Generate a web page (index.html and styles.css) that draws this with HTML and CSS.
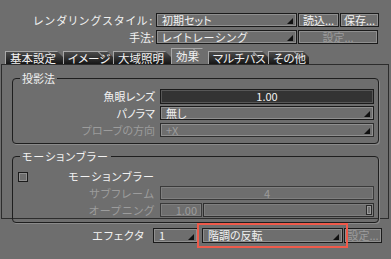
FILE: index.html
```html
<!DOCTYPE html>
<html lang="ja">
  <head>
    <meta charset="UTF-8" />
    <title>レンダリング</title>
    <link rel="stylesheet" href="styles.css">
  </head>
  <body>
    <div class="head">
      <div class="row">
        <span class="lbl wide-kana">レンダリングスタイル:</span>
        <div class="sel style">初期セット<i class="tri"></i></div>
        <div class="btn load">読込...</div>
        <div class="btn save">保存...</div>
      </div>
      <div class="row">
        <span class="lbl">手法:</span>
        <div class="sel style kana">レイトレーシング<i class="tri"></i></div>
        <div class="btn opts off">設定...</div>
      </div>
    </div>

    <div class="tabs">
      <div class="tab t1">基本設定</div>
      <div class="tab t2">イメージ</div>
      <div class="tab t3">大域照明</div>
      <div class="tab t4 active">効果</div>
      <div class="tab t5">マルチパス</div>
      <div class="tab t6">その他</div>
    </div>

    <div class="pane">
      <fieldset class="grp proj">
        <legend>投影法</legend>
        <div class="frow">
          <span class="flbl">魚眼レンズ</span>
          <div class="field dark">1.00</div>
        </div>
        <div class="frow">
          <span class="flbl">パノラマ</span>
          <div class="sel wide">無し<i class="tri"></i></div>
        </div>
        <div class="frow">
          <span class="flbl off">プローブの方向</span>
          <div class="sel wide off">+X<i class="tri"></i></div>
        </div>
      </fieldset>

      <fieldset class="grp blur">
        <legend class="kana">モーションブラー</legend>
        <div class="frow">
          <span class="flbl check"><i class="cb"></i><b class="kana">モーションブラー</b></span>
        </div>
        <div class="frow">
          <span class="flbl off kana">サブフレーム</span>
          <div class="field off">4</div>
        </div>
        <div class="frow">
          <span class="flbl off kana">オープニング</span>
          <div class="field off small">1.00</div>
          <div class="slider"><i class="thumb"></i></div>
        </div>
      </fieldset>
    </div>

    <div class="foot">
      <span class="lbl short kana">エフェクタ</span>
      <div class="sel num">1<i class="tri"></i></div>
      <div class="sel effect marked">階調の反転<i class="tri"></i></div>
      <div class="btn opts2 off">設定...</div>
    </div>
  </body>
</html>
```

FILE: styles.css
```css
* {
  margin: 0;
  padding: 0;
  box-sizing: border-box;
}
body {
  width: 391px;
  height: 259px;
  overflow: hidden;
  background-color: #6e6e6e;
  color: #f2f2f2;
  font-family: "Noto Sans CJK JP", "Noto Sans", sans-serif;
  font-size: 11px;
  line-height: 14px;
  font-feature-settings: "palt";
}
.off {
  color: #9c9c9c;
}
.kana {
  letter-spacing: 1px;
}
.wide-kana {
  letter-spacing: 1.8px;
}
b {
  font-weight: normal;
}

/* top rows */
.head {
  padding-top: 13px;
}
.row {
  display: flex;
  height: 14px;
  margin-bottom: 3px;
}
.lbl {
  width: 154px;
  margin-right: 2px;
  text-align: right;
}
.sel {
  display: flex;
  align-items: flex-end;
  height: 14px;
  padding-left: 5px;
  border: 1px solid #1b1b1b;
  box-shadow: inset 0 0 0 1px #8f8f8f;
  line-height: 12px;
}
.sel.style {
  width: 141px;
}
.tri {
  margin-left: auto;
  margin-right: 3px;
  margin-bottom: 2px;
  width: 0;
  height: 0;
  border-left: 6px solid transparent;
  border-bottom: 6px solid #111;
}
.btn {
  height: 14px;
  margin-left: 1px;
  border: 1px solid #1b1b1b;
  box-shadow: inset 0 0 0 1px #8f8f8f;
  text-align: center;
  line-height: 12px;
}
.btn.load {
  width: 41px;
}
.btn.save {
  width: 39px;
}
.btn.opts {
  width: 80px;
}

/* tabs */
.tabs {
  display: flex;
  align-items: flex-end;
  height: 16px;
  margin-top: 4px;
  padding-left: 5px;
}
.tab {
  position: relative;
  height: 13px;
  padding-left: 4px;
  border-top: 1px solid #a8a8a8;
  border-left: 1px solid #a8a8a8;
  background-image: linear-gradient(#4c4c4c, #161616);
  clip-path: polygon(0 0, calc(100% - 6px) 0, 100% 6px, 100% 100%, 0 100%);
  line-height: 12px;
  font-size: 11.5px;
  white-space: nowrap;
}
.tab::after {
  content: "";
  position: absolute;
  top: -1px;
  right: 0;
  width: 9px;
  height: 1px;
  background-color: #a8a8a8;
  transform-origin: left;
  transform: translateX(-6px) rotate(45deg);
}
.tab.t1 { width: 58px; }
.tab.t2 { width: 50px; }
.tab.t3 { width: 58px; }
.tab.t4 { width: 37px; }
.tab.t5 { width: 60px; }
.tab.t6 { width: 41px; }
.tab.active {
  height: 16px;
  padding-top: 1px;
  background-image: none;
  background-color: #6e6e6e;
}

/* pane */
.pane {
  width: 388px;
  height: 155px;
  margin-left: 1px;
  padding: 0 0 0 10px;
  border: 1px solid #2c2c2c;
}
.grp {
  width: 367px;
  margin-top: 6px;
  padding: 0 3px 5px 0;
  border: 1px solid #1e1e1e;
  border-radius: 4px;
  box-shadow: 1px 1px 0 #8a8a8a;
}
.grp legend {
  margin-left: 7px;
  padding: 0 2px;
  line-height: 14px;
}
.grp.proj {
  padding-top: 2px;
}
.grp.blur {
  margin-top: 5px;
  padding-bottom: 5px;
}
.frow {
  display: flex;
  height: 15px;
  margin-top: 2px;
}
.blur .frow {
  height: 14px;
  margin-top: 3px;
}
.blur .frow:first-of-type {
  margin-top: 6px;
}
.flbl {
  width: 142px;
  margin-right: 5px;
  text-align: right;
  line-height: 15px;
}
.flbl.check {
  display: flex;
  align-items: center;
  justify-content: space-between;
  padding-left: 5px;
}
.cb {
  width: 10px;
  height: 10px;
  margin-top: 2px;
  border: 1px solid #1b1b1b;
  box-shadow: inset 0 0 0 1px #8f8f8f;
}
.field {
  width: 214px;
  border: 1px solid #1b1b1b;
  box-shadow: inset 0 0 0 1px #8f8f8f;
  text-align: center;
  line-height: 13px;
}
.blur .field {
  line-height: 12px;
}
.field.dark {
  background-color: #333;
  box-shadow: inset 0 0 0 1px #575757;
}
.field.off {
  border-color: #3a3a3a;
  box-shadow: inset 0 0 0 1px #7f7f7f;
}
.field.small {
  width: 42px;
  padding-right: 4px;
  text-align: right;
}
.sel.wide {
  width: 214px;
}
.sel.wide.off {
  border-color: #2e2e2e;
}
.slider {
  display: flex;
  justify-content: flex-end;
  width: 171px;
  margin-left: 1px;
  padding: 1px;
  border: 1px solid #2e2e2e;
  box-shadow: inset 0 0 0 1px #7f7f7f;
}
.thumb {
  width: 6px;
  border: 1px solid #2a2a2a;
  box-shadow: inset 0 0 0 1px #999;
}

/* bottom row */
.foot {
  display: flex;
  height: 15px;
  margin-top: 9px;
}
.lbl.short {
  width: 145px;
  margin-right: 8px;
  line-height: 15px;
}
.foot .sel {
  height: 15px;
  line-height: 13px;
}
.sel.num {
  width: 45px;
}
.sel.effect {
  position: relative;
  width: 141px;
  margin-left: 4px;
}
.marked::after {
  content: "";
  position: absolute;
  top: -6px;
  left: -6px;
  right: -6px;
  bottom: -6px;
  border: 2px solid #ef5a4a;
}
.btn.opts2 {
  width: 38px;
  height: 15px;
  margin-left: 1px;
}
```
